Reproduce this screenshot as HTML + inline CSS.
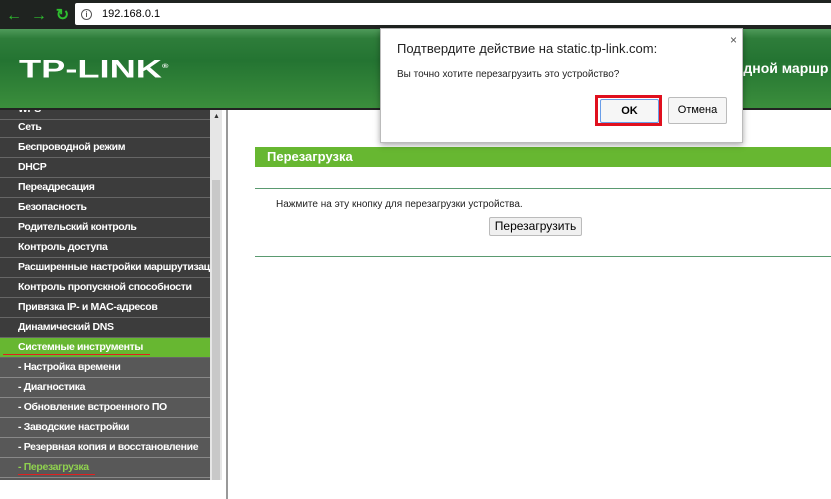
<!DOCTYPE html><html><head><meta charset="utf-8"><style>
body{margin:0;width:831px;height:499px;overflow:hidden;background:#fff;font-family:"Liberation Sans",sans-serif;position:relative}
.abs{position:absolute}
#top{left:0;top:0;width:831px;height:29px;background:#1f2320}
#addr{left:75px;top:3px;width:760px;height:22px;background:#fff;border-radius:2px;font-size:11px;line-height:22px}
#hdr{left:0;top:29px;width:831px;height:79px;background:linear-gradient(#4f9a5a 0,#2e7d3a 12%,#247432 40%,#3b8e3c 100%);border-bottom:2px solid #222}
#logo{left:19px;top:56px;color:#fff;font-size:29px;font-weight:bold;letter-spacing:0px;transform:scale(1.25,.85);transform-origin:left top;white-space:nowrap}
#side{left:0;top:110px;width:210px;height:370px;background:#3c3c3c;overflow:hidden}
.it{position:absolute;left:0;width:210px;height:19px;border-bottom:1px solid #666;color:#fff;font-size:10.5px;font-weight:bold;line-height:19px;text-indent:18px;white-space:nowrap;overflow:hidden;letter-spacing:-0.35px}
.sub{background:#585858;border-bottom:1px solid #888}
#sb{left:210px;top:110px;width:12px;height:370px;background:#e6e6e6}
#thumb{left:212px;top:180px;width:8px;height:300px;background:#c8c8c8}
#vl{left:226px;top:110px;width:2px;height:389px;background:#999}
#dlg{left:380px;top:28px;width:361px;height:113px;background:#fff;border:1px solid #bbb;box-shadow:0 2px 6px rgba(0,0,0,.35)}
.btn{position:absolute;border:1px solid #bbb;border-radius:2px;background:#f6f6f6;font-size:11px;text-align:center}
</style></head><body>
<div class="abs" id="top"></div>
<div class="abs" style="left:6px;top:5px;color:#2fbf2f;font-size:16px;font-weight:bold">←&nbsp;&nbsp;→&nbsp;&nbsp;↻</div>
<div class="abs" id="addr"><span style="margin-left:6px;border:1px solid #555;border-radius:50%;display:inline-block;width:9px;height:9px;font-size:8px;line-height:9px;text-align:center;vertical-align:middle">i</span><span style="margin-left:10px">192.168.0.1</span></div>
<div class="abs" id="hdr"></div>
<div class="abs" id="logo">TP-LINK<sup style="font-size:7px">®</sup></div>
<div class="abs" style="left:735px;top:60px;color:#fff;font-size:14px;font-weight:bold;white-space:nowrap">одной маршр</div>
<div class="abs" id="side">
<div class="it" style="top:-10px">WPS</div>
<div class="it" style="top:8px">Сеть</div>
<div class="it" style="top:28px">Беспроводной режим</div>
<div class="it" style="top:48px">DHCP</div>
<div class="it" style="top:68px">Переадресация</div>
<div class="it" style="top:88px">Безопасность</div>
<div class="it" style="top:108px">Родительский контроль</div>
<div class="it" style="top:128px">Контроль доступа</div>
<div class="it" style="top:148px">Расширенные настройки маршрутизации</div>
<div class="it" style="top:168px">Контроль пропускной способности</div>
<div class="it" style="top:188px">Привязка IP- и MAC-адресов</div>
<div class="it" style="top:208px">Динамический DNS</div>
<div class="it" style="top:228px;background:#67b731">Системные инструменты</div>
<div class="it sub" style="top:248px">- Настройка времени</div>
<div class="it sub" style="top:268px">- Диагностика</div>
<div class="it sub" style="top:288px">- Обновление встроенного ПО</div>
<div class="it sub" style="top:308px">- Заводские настройки</div>
<div class="it sub" style="top:328px">- Резервная копия и восстановление</div>
<div class="it sub" style="top:348px;color:#8fd14f">- Перезагрузка</div>
<div class="it sub" style="top:368px;height:2px"></div>
</div>
<div class="abs" style="left:3px;top:354px;width:147px;height:1px;background:#e02020"></div>
<div class="abs" style="left:18px;top:474px;width:77px;height:1px;background:#e02020"></div>
<div class="abs" id="sb"></div><div class="abs" id="thumb"></div>
<div class="abs" style="left:213px;top:113px;font-size:7px;color:#333">▲</div>
<div class="abs" id="vl"></div>
<div class="abs" style="left:255px;top:147px;width:576px;height:20px;background:#67b731;color:#fff;font-size:13px;font-weight:bold;line-height:20px;text-indent:12px">Перезагрузка</div>
<div class="abs" style="left:255px;top:188px;width:576px;height:1px;background:#5a9a70"></div>
<div class="abs" style="left:255px;top:256px;width:576px;height:1px;background:#5a9a70"></div>
<div class="abs" style="left:276px;top:199px;font-size:10px;color:#222">Нажмите на эту кнопку для перезагрузки устройства.</div>
<div class="btn" style="left:489px;top:217px;width:91px;height:17px;line-height:17px;font-size:12px;background:#f0f0f0">Перезагрузить</div>
<div class="abs" id="dlg">
<div class="abs" style="left:16px;top:12px;font-size:13px;color:#222">Подтвердите действие на static.tp-link.com:</div>
<div class="abs" style="left:349px;top:4px;font-size:12px;color:#555">×</div>
<div class="abs" style="left:16px;top:40px;font-size:10px;color:#222">Вы точно хотите перезагрузить это устройство?</div>
<div class="abs" style="left:214px;top:66px;width:67px;height:31px;border:3px solid #e0101e;box-sizing:border-box"></div>
<div class="btn" style="left:219px;top:70px;width:57px;height:22px;line-height:22px;font-weight:bold;border-color:#6a9ee8">OK</div>
<div class="btn" style="left:287px;top:68px;width:57px;height:25px;line-height:25px">Отмена</div>
</div>
</body></html>
